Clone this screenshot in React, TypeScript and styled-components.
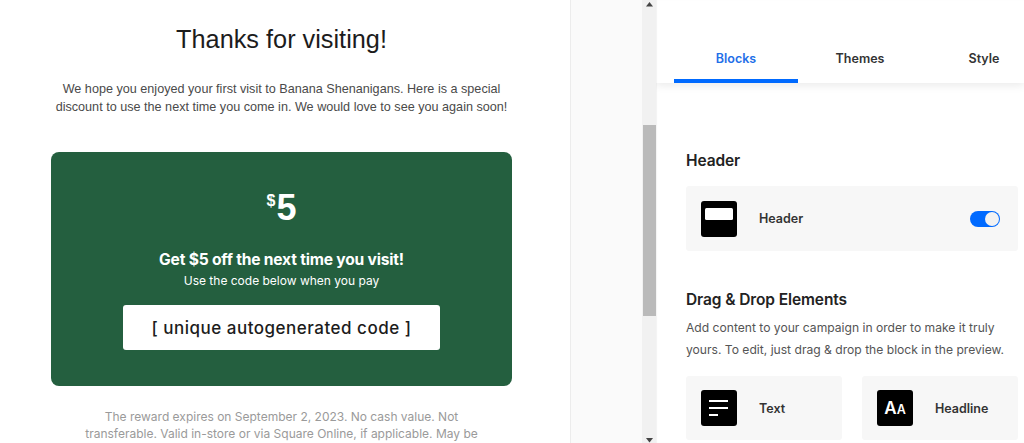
import React from "react";
import styled, { createGlobalStyle } from "styled-components";

const Global = createGlobalStyle`
  html, body { margin: 0; padding: 0; height: 443px; overflow: hidden; background: #fff; }
  #root { height: 443px; }
`;

const Page = styled.div`
  display: flex;
  width: 1024px;
  height: 443px;
  overflow: hidden;
`;

const Preview = styled.main`
  width: 571px;
  flex: none;
  height: 443px;
  overflow: hidden;
  background: #fff;
  box-sizing: border-box;
  padding-top: 24px;
  border-right: 1px solid #ececec;
  display: flex;
  flex-direction: column;
  align-items: center;
  font-family: "Liberation Sans", Arial, sans-serif;
  padding-right: 7px;
`;

const Title = styled.h1`
  margin: 0;
  font-size: 25.3px;
  line-height: 30px;
  font-weight: 400;
  color: #1c1c1c;
`;

const Intro = styled.p`
  margin: 27px 0 0;
  font-size: 12.64px;
  line-height: 17.5px;
  color: #4a4a4a;
  text-align: center;
  white-space: nowrap;
`;

const Card = styled.section`
  margin-top: 36px;
  width: 461px;
  height: 234px;
  flex: none;
  box-sizing: border-box;
  border-radius: 8px;
  background: #245f3f;
  color: #fff;
  display: flex;
  flex-direction: column;
  align-items: center;
  padding-top: 34px;
`;

const Amount = styled.div`
  display: flex;
  align-items: flex-start;
  font-family: "Liberation Sans", Arial, sans-serif;
  font-weight: 700;
  font-size: 36px;
  line-height: 44px;
`;

const Currency = styled.span`
  font-size: 16px;
  line-height: 16px;
  margin-top: 7px;
  margin-right: 1px;
`;

const Offer = styled.div`
  margin-top: 20px;
  font-family: Inter, sans-serif;
  font-weight: 700;
  font-size: 15.6px;
  line-height: 20px;
  letter-spacing: -0.2px;
`;

const Hint = styled.div`
  margin-top: 3px;
  font-family: Inter, sans-serif;
  font-size: 12px;
  line-height: 16px;
`;

const CodeBox = styled.div`
  margin-top: 16px;
  width: 317px;
  height: 45px;
  border-radius: 3px;
  background: #fff;
  color: #1c1c1c;
  display: flex;
  align-items: center;
  justify-content: center;
  font-family: Inter, sans-serif;
  font-size: 17px;
  font-weight: 500;
  letter-spacing: 0.5px;
`;

const Terms = styled.p`
  margin: 22px 0 0;
  width: 400px;
  font-family: Inter, sans-serif;
  font-size: 12px;
  line-height: 17px;
  color: #9a9a9a;
  text-align: center;
`;

const Gutter = styled.div`
  width: 71px;
  flex: none;
  background: #fafafa;
`;

const ScrollTrack = styled.div`
  width: 14px;
  flex: none;
  height: 443px;
  background: #f1f1f1;
  display: flex;
  flex-direction: column;
  align-items: center;
  box-sizing: border-box;
`;

const ScrollGap = styled.div<{ $h: number }>`
  height: ${(p) => p.$h}px;
  flex: none;
  display: flex;
  justify-content: center;
  align-items: ${(p) => (p.$h > 50 ? "flex-end" : "center")};
  width: 100%;
`;

const Thumb = styled.div`
  width: 13px;
  height: 191px;
  flex: none;
  background: #bababa;
`;

const Panel = styled.aside`
  flex: 1;
  min-width: 0;
  height: 443px;
  background: #fff;
  font-family: Inter, sans-serif;
  overflow: hidden;
  box-shadow: inset 1px 0 1px rgba(0, 0, 0, 0.05);
`;

const Tabs = styled.nav`
  height: 83px;
  box-sizing: border-box;
  padding-left: 18px;
  display: flex;
  box-shadow: 0 3px 8px rgba(0, 0, 0, 0.08);
`;

const Tab = styled.div<{ $active?: boolean }>`
  width: 124px;
  flex: none;
  height: 83px;
  box-sizing: border-box;
  padding-top: 50px;
  text-align: center;
  font-size: 12.5px;
  line-height: 18px;
  font-weight: 600;
  color: ${(p) => (p.$active ? "#1f6fe8" : "#333")};
  border-bottom: 4px solid ${(p) => (p.$active ? "#006aff" : "transparent")};
`;

const Body = styled.div`
  padding: 68px 6px 0 30px;
`;

const SectionTitle = styled.h2`
  margin: 0;
  font-size: 15.5px;
  line-height: 20px;
  font-weight: 600;
  letter-spacing: -0.1px;
  color: #222;
`;

const Row = styled.div`
  margin-top: 15px;
  height: 65px;
  background: #f7f7f7;
  border-radius: 3px;
  display: flex;
  align-items: center;
  padding: 0 18px 0 15px;
`;

const Label = styled.span`
  font-size: 12.5px;
  font-weight: 600;
  color: #333;
  margin-left: 22px;
`;

const IconTile = styled.div`
  width: 36px;
  height: 36px;
  flex: none;
  border-radius: 3px;
  background: #000;
  color: #fff;
  display: flex;
  align-items: baseline;
  justify-content: center;
  line-height: 36px;
`;

const Toggle = styled.div`
  margin-left: auto;
  width: 30px;
  height: 16px;
  border-radius: 8px;
  background: #006aff;
  display: flex;
  justify-content: flex-end;
  align-items: center;
  padding-right: 1px;
  box-sizing: border-box;
`;

const Knob = styled.div`
  width: 14px;
  height: 14px;
  border-radius: 50%;
  background: #f2f2f2;
`;

const DragSection = styled.div`
  margin-top: 39px;
`;

const Description = styled.p`
  margin: 7px 0 0;
  font-size: 12.12px;
  line-height: 22px;
  color: #555;
  white-space: nowrap;
`;

const Grid = styled.div`
  margin-top: 15px;
  display: grid;
  grid-template-columns: 156px 156px;
  gap: 20px;
`;

const GridCell = styled(Row)`
  margin-top: 0;
  height: 64px;
  padding-right: 0;
`;

const BigA = styled.span`
  font-size: 17px;
  font-weight: 600;
`;

const SmallA = styled.span`
  font-size: 12.5px;
  font-weight: 600;
`;

const Arrow = ({ down }: { down?: boolean }) => (
  <svg width="7" height="5" viewBox="0 0 7 5">
    <path d={down ? "M0 0h7L3.5 4.5z" : "M0 4.5h7L3.5 0z"} fill="#444" />
  </svg>
);

const HeaderGlyph = () => (
  <svg width="36" height="36" viewBox="0 0 36 36">
    <rect x="4" y="7" width="28" height="12" rx="1.5" fill="#fff" />
  </svg>
);

const TextGlyph = () => (
  <svg width="36" height="36" viewBox="0 0 36 36">
    <path d="M8 11h19M8 18h19M8 25h9" stroke="#fff" strokeWidth="2" fill="none" />
  </svg>
);

export default function App() {
  return (
    <Page>
      <Global />
      <Preview>
        <Title>Thanks for visiting!</Title>
        <Intro>
          We hope you enjoyed your first visit to Banana Shenanigans. Here is a special
          <br />
          discount to use the next time you come in. We would love to see you again soon!
        </Intro>
        <Card>
          <Amount>
            <Currency>$</Currency>5
          </Amount>
          <Offer>Get $5 off the next time you visit!</Offer>
          <Hint>Use the code below when you pay</Hint>
          <CodeBox>[ unique autogenerated code ]</CodeBox>
        </Card>
        <Terms>
          The reward expires on September 2, 2023. No cash value. Not transferable. Valid
          in-store or via Square Online, if applicable. May be
        </Terms>
      </Preview>
      <Gutter />
      <ScrollTrack>
        <ScrollGap $h={8}>
          <Arrow />
        </ScrollGap>
        <ScrollGap $h={117} />
        <Thumb />
        <ScrollGap $h={127}>
          <Arrow down />
        </ScrollGap>
      </ScrollTrack>
      <Panel>
        <Tabs>
          <Tab $active>Blocks</Tab>
          <Tab>Themes</Tab>
          <Tab>Style</Tab>
        </Tabs>
        <Body>
          <SectionTitle>Header</SectionTitle>
          <Row>
            <IconTile>
              <HeaderGlyph />
            </IconTile>
            <Label>Header</Label>
            <Toggle>
              <Knob />
            </Toggle>
          </Row>
          <DragSection>
            <SectionTitle>Drag &amp; Drop Elements</SectionTitle>
            <Description>
              Add content to your campaign in order to make it truly
              <br />
              yours. To edit, just drag &amp; drop the block in the preview.
            </Description>
            <Grid>
              <GridCell>
                <IconTile>
                  <TextGlyph />
                </IconTile>
                <Label>Text</Label>
              </GridCell>
              <GridCell>
                <IconTile>
                  <BigA>A</BigA>
                  <SmallA>A</SmallA>
                </IconTile>
                <Label>Headline</Label>
              </GridCell>
            </Grid>
          </DragSection>
        </Body>
      </Panel>
    </Page>
  );
}
